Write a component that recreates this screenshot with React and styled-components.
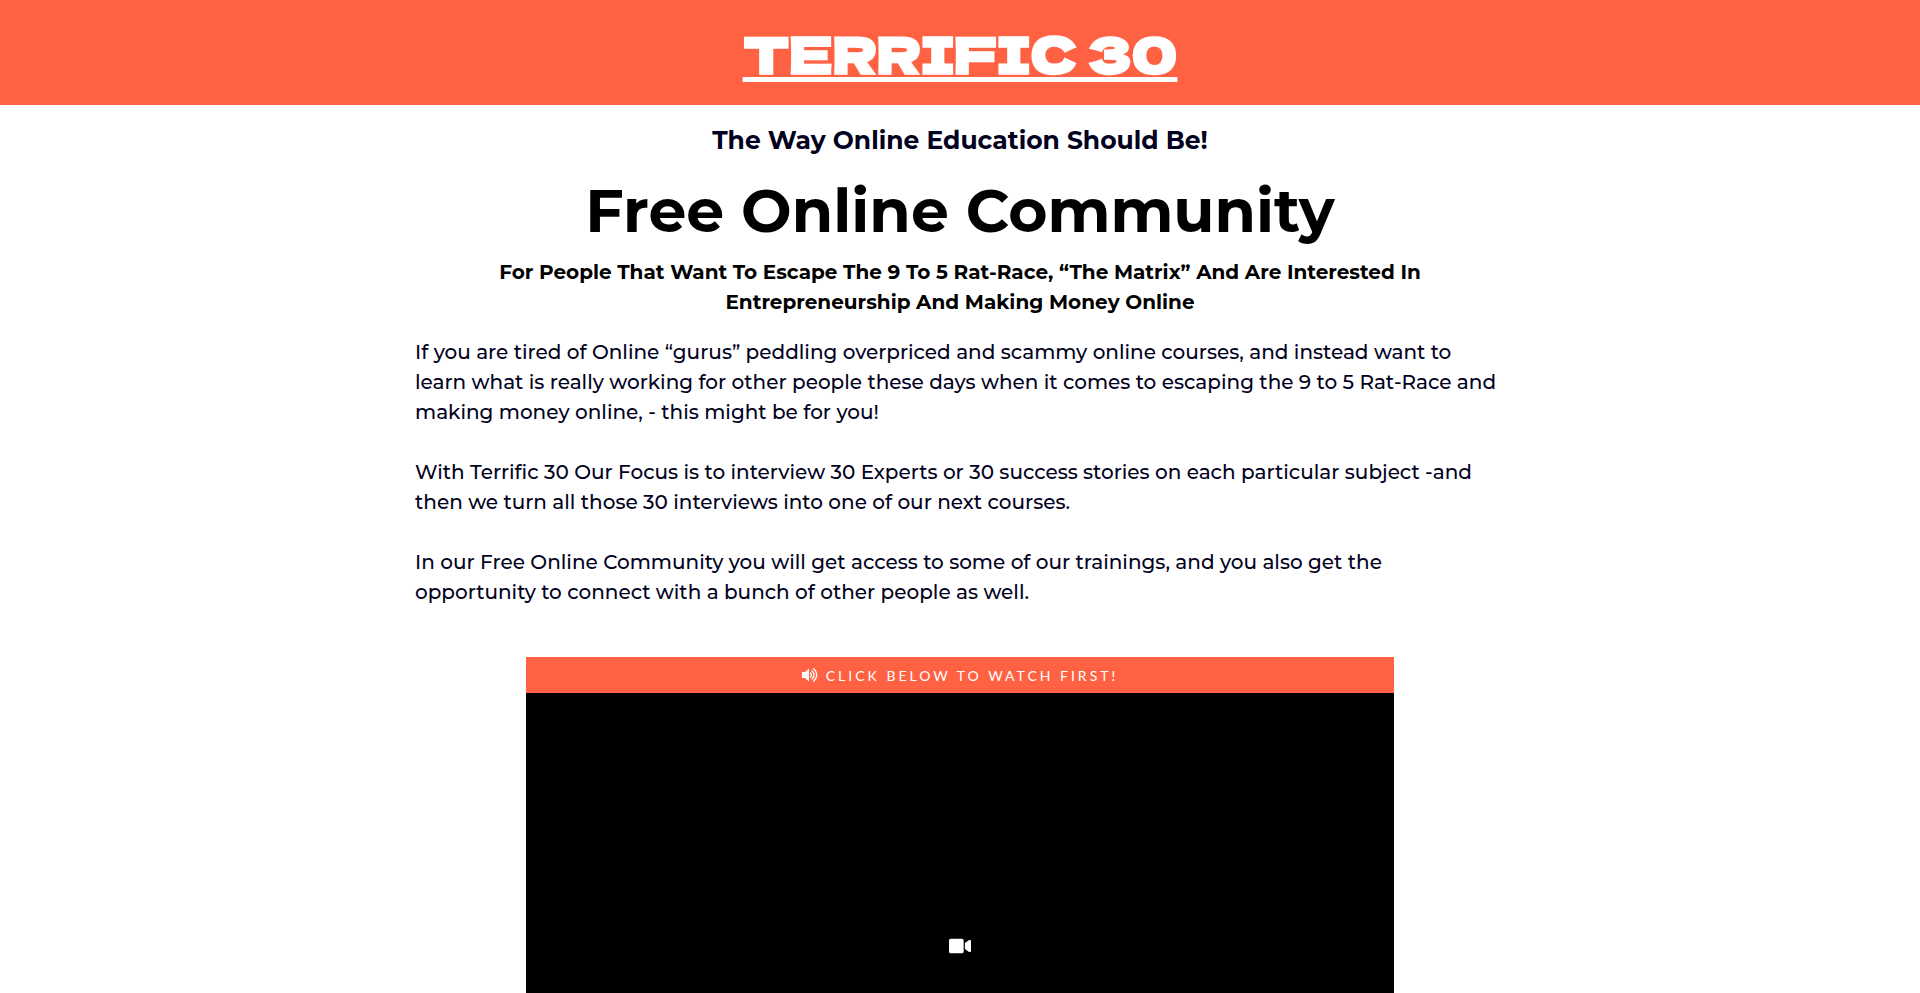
import React from "react";
import styled, { createGlobalStyle } from "styled-components";
import { FaVideo } from "react-icons/fa";

const GlobalStyle = createGlobalStyle`
    * {
        box-sizing: border-box;
    }
    body {
        margin: 0;
        background-color: #fff;
        color: #02021e;
        font-family: Montserrat, Inter, "Open Sans", sans-serif;
        scrollbar-width: none;
    }
`;

const Header = styled.header`
    display: flex;
    justify-content: center;
    padding: 22px 16px 23px;
    background-color: #ff6242;
`;

const Logo = styled.h1`
    margin: 0;
    color: #fff;
    font-family: "Dela Gothic One", Montserrat, "DejaVu Sans", sans-serif;
    font-size: 50px;
    font-weight: 700;
    line-height: 60px;
    text-align: center;
    text-decoration: underline;
`;

const Main = styled.main`
    display: flex;
    flex-direction: column;
    align-items: center;
    width: 100%;
    max-width: 1122px;
    margin: 0 auto;
    padding: 16px 16px 48px;
`;

const Intro = styled.div`
    display: flex;
    flex-direction: column;
    align-items: center;
    gap: 6px;
`;

const Title = styled.h2`
    margin: 0;
    color: ${(props) => props.$color};
    font-size: ${(props) => props.$size};
    font-weight: 700;
    line-height: ${(props) => props.$line};
    text-align: center;
`;

const Tagline = styled.h3`
    max-width: 960px;
    margin: 0 0 20px;
    color: #000;
    font-size: 20px;
    font-weight: 700;
    line-height: 30px;
    text-align: center;
`;

const Copy = styled.div`
    display: flex;
    flex-direction: column;
    gap: 30px;
    width: 100%;
    p {
        margin: 0;
        font-size: 20px;
        font-weight: 500;
        line-height: 30px;
    }
`;

const VideoBox = styled.section`
    width: 100%;
    max-width: 868px;
    margin-top: 50px;
`;

const VideoBar = styled.div`
    display: flex;
    align-items: center;
    justify-content: center;
    gap: 8px;
    height: 36px;
    background-color: #ff6242;
    color: #fff;
    font-family: Lato, sans-serif;
    font-size: 14px;
    letter-spacing: 3px;
`;

const Player = styled.button`
    display: flex;
    align-items: center;
    justify-content: center;
    width: 100%;
    aspect-ratio: 12 / 7;
    padding: 0;
    border: 0;
    background-color: #000;
    color: #fff;
    cursor: pointer;
`;

const SoundIcon = () => (
    <svg width="16" height="14" viewBox="0 0 16 14" aria-hidden="true">
        <path d="M0 4h3l4-3.5v13L3 10H0z" fill="#fff" />
        <path
            d="M8.5 5a2.6 2.6 0 0 1 0 4M10 2.9a5.2 5.2 0 0 1 0 8.2M11.5.8a7.7 7.7 0 0 1 0 12.4"
            fill="none"
            stroke="#fff"
            strokeWidth="1.3"
            strokeLinecap="round"
        />
    </svg>
);

const App = () => {
    return (
        <>
            <GlobalStyle />
            <Header>
                <Logo>TERRIFIC 30</Logo>
            </Header>
            <Main>
                <Intro>
                    <Title $size="25px" $line="38px" $color="#02021e">
                        The Way Online Education Should Be!
                    </Title>
                    <Title $size="60px" $line="92px" $color="#000">
                        Free Online Community
                    </Title>
                </Intro>
                <Tagline>
                    For People That Want To Escape The 9 To 5 Rat-Race, “The
                    Matrix” And Are Interested In Entrepreneurship And Making
                    Money Online
                </Tagline>
                <Copy>
                    <p>
                        If you are tired of Online “gurus” peddling overpriced
                        and scammy online courses, and instead want to learn
                        what is really working for other people these days when
                        it comes to escaping the 9 to 5 Rat-Race and making
                        money online, - this might be for you!
                    </p>
                    <p>
                        With Terrific 30 Our Focus is to interview 30 Experts or
                        30 success stories on each particular subject -and then
                        we turn all those 30 interviews into one of our next
                        courses.
                    </p>
                    <p>
                        In our Free Online Community you will get access to some
                        of our trainings, and you also get the opportunity to
                        connect with a bunch of other people as well.
                    </p>
                </Copy>
                <VideoBox>
                    <VideoBar>
                        <SoundIcon />
                        <span>CLICK BELOW TO WATCH FIRST!</span>
                    </VideoBar>
                    <Player type="button" aria-label="Play video">
                        <FaVideo size={22} />
                    </Player>
                </VideoBox>
            </Main>
        </>
    );
};

export default App;
